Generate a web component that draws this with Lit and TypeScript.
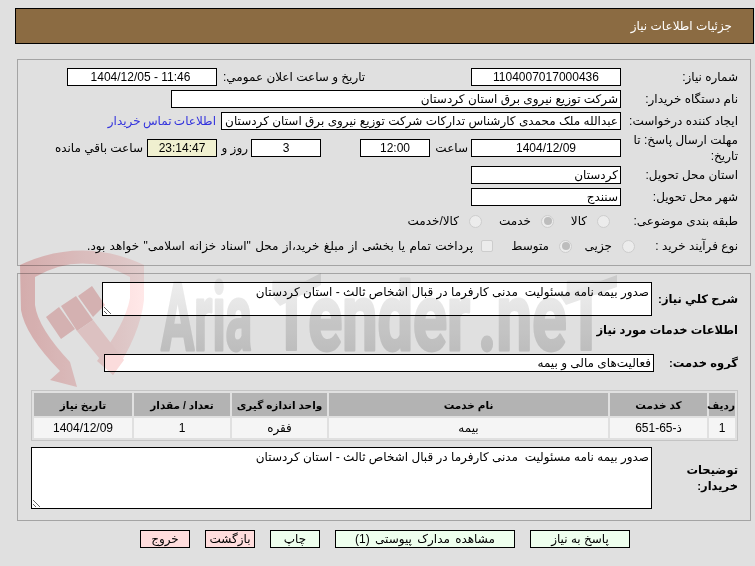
import { LitElement, html, css, svg } from "lit";
import { customElement } from "lit/decorators.js";

const DESC = "صدور بیمه نامه مسئولیت  مدنی کارفرما در قبال اشخاص ثالث - استان کردستان";

const watermark = svg`
<svg class="wm" width="755" height="566" viewBox="0 0 755 566" xmlns="http://www.w3.org/2000/svg" aria-hidden="true">
  <defs>
    <linearGradient id="g" gradientUnits="userSpaceOnUse" x1="0" y1="280" x2="0" y2="352"><stop offset="0" stop-color="#eeeeee"/><stop offset="1" stop-color="#d8d8d8"/></linearGradient>
    <linearGradient id="r" x1="0" y1="0" x2="1" y2="0"><stop offset="0" stop-color="#f2c4c4"/><stop offset="1" stop-color="#ffe8e8"/></linearGradient>
  </defs>
  <path fill="url(#r)" d="M20 265 Q82 236 144 265 L144 300 Q140 335 113 375 L97 361 Q125 325 130 298 L130 277 Q82 250 35 277 L35 305 Q38 328 70 362 L77 387 L50 380 L60 371 Q25 335 21 310 Z"/>
  <path fill="#f2caca" d="M46 317 L59 307 L75 329 L61 339 Z"/>
  <path fill="#f2caca" d="M61 306 L76 296 L93 320 L77 331 Z"/>
  <path fill="#f2caca" d="M78 296 L92 286 L105 305 L93 317 Z"/>
  <path fill="#fbdcdc" d="M77 331 L93 320 L124 360 L113 375 Z"/>
  <g font-family="Roboto, sans-serif" font-weight="700" font-size="95" fill="url(#g)" stroke="url(#g)" stroke-width="3" stroke-linejoin="round">
    <text x="161" y="350" textLength="91" lengthAdjust="spacingAndGlyphs">Aria</text>
    <text x="272" y="350" textLength="198" lengthAdjust="spacingAndGlyphs">Tender</text>
    <text x="478" y="350" textLength="128" lengthAdjust="spacingAndGlyphs">.neT</text>
  </g>
  <path fill="#e8e8e8" d="M273 298 L321 273 L321 285 L280 306 Z"/>
  <path fill="#e8e8e8" d="M560 296 L617 275 L617 287 L566 305 Z"/>
</svg>`;

@customElement("app-root")
export class AppRoot extends LitElement {
  static styles = css`
    :host {
      display: block;
      position: relative;
      width: 755px;
      height: 566px;
      overflow: hidden;
      background: #e0e0e0;
      color: #000;
      font: 12px/16px "Liberation Sans", "DejaVu Sans", sans-serif;
    }
    .wm { position: absolute; left: 0; top: 0; mix-blend-mode: multiply; pointer-events: none; }
    .page {
      position: relative;
      direction: rtl;
      display: flex;
      flex-direction: column;
      padding: 8px 1px 0 17px;
    }
    .head {
      margin-left: -2px;
      height: 34px;
      border: 1px solid #000;
      background: #8b6b42;
      color: #fff;
      display: flex;
      align-items: center;
      padding-right: 21px;
    }
    .box {
      box-sizing: border-box;
      border: 1px solid #a4a4a4;
      margin-right: 3px;
      display: flex;
      flex-direction: column;
    }
    .b1 { margin-top: 15px; height: 207px; padding: 8px 12px 0 49px; }
    .b2 { margin-top: 7px; height: 248px; padding: 8px 12px 0 13px; }
    .row { display: flex; align-items: center; height: 18px; margin-bottom: 4px; }
    .lab { width: 117px; flex: none; }
    .f {
      box-sizing: border-box;
      height: 18px;
      flex: none;
      border: 1px solid #000;
      background: #fff;
      padding: 0 2px;
      line-height: 16px;
      white-space: nowrap;
      overflow: hidden;
    }
    .c { text-align: center; direction: ltr; }
    .w150 { width: 150px; }
    .w70 { width: 70px; }
    .w400 { width: 400px; }
    .w450 { width: 450px; }
    .w550 { width: 550px; }
    .shift { padding-right: 5px; }
    .clock { background: #f0f0d0; }
    .push { margin-right: auto; }
    .pub { margin-left: 6px; }
    .link { color: #3333dd; margin-right: 5px; word-spacing: -1px; }
    .tx { flex: none; }
    .opt { display: flex; align-items: center; gap: 10px; flex: none; }
    .rd {
      box-sizing: border-box;
      width: 13px; height: 13px;
      border-radius: 50%;
      border: 1px solid #cdcdcd;
      background: #ececec;
      display: flex; align-items: center; justify-content: center;
      flex: none;
    }
    .rd.on::after { content: ""; width: 8px; height: 8px; border-radius: 50%; background: #bdbdbd; }
    .ck {
      box-sizing: border-box;
      width: 12px; height: 12px;
      border: 1px solid #cdcdcd;
      border-radius: 2px;
      background: #ececec;
      flex: none;
    }
    .long { gap: 8px; word-spacing: 1px; }
    .b { font-weight: 700; font-size: 11.5px; }
    textarea {
      display: block;
      box-sizing: border-box;
      border: 1px solid #000;
      background: #fff;
      margin: 0;
      padding: 1px 2px;
      font: inherit;
      color: #000;
      outline: none;
      flex: none;
    }
    .sumrow { display: flex; align-items: center; }
    table {
      border-collapse: separate;
      border-spacing: 2px;
      table-layout: fixed;
      width: 706px;
      border: 1px solid #c4c4c4;
      margin-top: 18px;
      text-align: center;
    }
    th { background: #b3b3b3; height: 23px; padding: 0; font-size: 10.5px; white-space: nowrap; }
    td { background: #f5f5f5; height: 20px; padding: 0; }
    .btns { display: flex; gap: 15px; margin: 9px 124px 0 0; }
    .btn {
      box-sizing: border-box;
      height: 18px;
      width: 50px;
      border: 1px solid #000;
      background: #eeffee;
      text-align: center;
      line-height: 16px;
      flex: none;
    }
    .wide { word-spacing: 2px; }
    .red { background: #ffdddd; }
  `;

  render() {
    return html`
      <div class="page">
        <div class="head">جزئیات اطلاعات نیاز</div>
        <div class="box b1">
          <div class="row">
            <span class="lab">شماره نیاز:</span>
            <div class="f w150 c">1104007017000436</div>
            <span class="tx push pub">تاریخ و ساعت اعلان عمومي:</span>
            <div class="f w150 c shift">1404/12/05 - 11:46</div>
          </div>
          <div class="row">
            <span class="lab">نام دستگاه خریدار:</span>
            <div class="f w450">شرکت توزیع نیروی برق استان کردستان</div>
          </div>
          <div class="row" style="margin-bottom:9px">
            <span class="lab">ایجاد کننده درخواست:</span>
            <div class="f w400">عبدالله ملک محمدی کارشناس تدارکات شرکت توزیع نیروی برق استان کردستان</div>
            <span class="tx link">اطلاعات تماس خریدار</span>
          </div>
          <div class="row" style="margin-bottom:9px">
            <span class="lab">مهلت ارسال پاسخ: تا تاریخ:</span>
            <div class="f w150 c">1404/12/09</div>
            <span class="tx" style="margin:0 3px 0 3px;width:35px">ساعت</span>
            <div class="f w70 c">12:00</div>
            <div class="f w70 c" style="margin-right:39px">3</div>
            <span class="tx" style="margin:0 3px;width:28px">روز و</span>
            <div class="f w70 c clock">23:14:47</div>
            <span class="tx" style="margin-right:4px">ساعت باقي مانده</span>
          </div>
          <div class="row">
            <span class="lab">استان محل تحویل:</span>
            <div class="f w150">کردستان</div>
          </div>
          <div class="row" style="margin-bottom:6px">
            <span class="lab">شهر محل تحویل:</span>
            <div class="f w150">سنندج</div>
          </div>
          <div class="row" style="margin-bottom:7px">
            <span class="lab">طبقه بندی موضوعی:</span>
            <div class="opt" style="margin-right:11px;width:56px"><span class="rd"></span>کالا</div>
            <div class="opt" style="width:72px"><span class="rd on"></span>خدمت</div>
            <div class="opt"><span class="rd"></span>کالا/خدمت</div>
          </div>
          <div class="row">
            <span class="lab">نوع فرآیند خرید :</span>
            <div class="opt" style="width:63px;margin-right:-14px"><span class="rd"></span>جزیی</div>
            <div class="opt" style="width:79px"><span class="rd on"></span>متوسط</div>
            <div class="opt long"><span class="ck"></span>پرداخت تمام یا بخشی از مبلغ خرید،از محل "اسناد خزانه اسلامی" خواهد بود.</div>
          </div>
        </div>
        <div class="box b2">
          <div class="sumrow">
            <span class="lab b">شرح کلي نیاز:</span>
            <textarea style="width:550px;height:34px;margin-right:-31px">${DESC}</textarea>
          </div>
          <div class="b" style="margin-top:6px">اطلاعات خدمات مورد نیاز</div>
          <div class="sumrow" style="margin-top:16px">
            <span class="lab b">گروه خدمت:</span>
            <div class="f w550" style="margin-right:-33px">فعالیت‌های مالی و بیمه</div>
          </div>
          <table>
            <colgroup>
              <col style="width:26px" /><col style="width:97px" /><col style="width:279px" />
              <col style="width:95px" /><col style="width:96px" /><col style="width:98px" />
            </colgroup>
            <thead>
              <tr><th>ردیف</th><th>کد خدمت</th><th>نام خدمت</th><th>واحد اندازه گیری</th><th>تعداد / مقدار</th><th>تاریخ نیاز</th></tr>
            </thead>
            <tbody>
              <tr><td>1</td><td>ذ-65-651</td><td>بیمه</td><td>فقره</td><td>1</td><td>1404/12/09</td></tr>
            </tbody>
          </table>
          <div class="sumrow" style="margin-top:6px">
            <span class="lab b" style="width:86px">توضیحات خریدار:</span>
            <textarea style="width:621px;height:62px">${DESC}</textarea>
          </div>
        </div>
        <div class="btns">
          <div class="btn" style="width:100px">پاسخ به نیاز</div>
          <div class="btn wide" style="width:180px">مشاهده مدارک پیوستی (1)</div>
          <div class="btn">چاپ</div>
          <div class="btn red">بازگشت</div>
          <div class="btn red">خروج</div>
        </div>
      </div>
      ${watermark}
    `;
  }
}
